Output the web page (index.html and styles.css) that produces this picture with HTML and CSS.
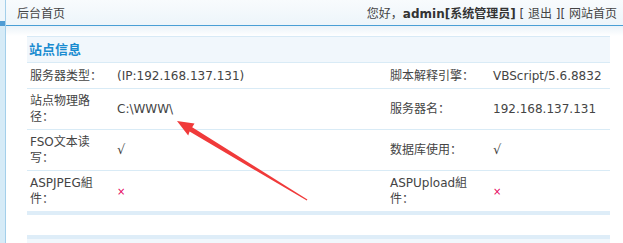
FILE: index.html
```html
<!doctype html>
<html lang="zh-CN">
  <head>
    <meta charset="UTF-8" />
    <title>后台首页</title>
    <link rel="stylesheet" href="styles.css">
  </head>
  <body>
    <div class="frame">
      <div class="side">
        <div class="side-top"></div>
        <div class="side-mark"></div>
      </div>

      <div class="main">
        <div class="topbar">
          <span class="crumb">后台首页</span>
          <span class="user">您好，<b>admin[系统管理员]</b> [ <a href="#">退出</a> ][ <a href="#">网站首页</a></span>
        </div>
        <div class="shade"></div>

        <div class="panel">
          <div class="panel-title">站点信息</div>
          <div class="row">
            <div class="label">服务器类型：</div>
            <div class="value">(IP:192.168.137.131)</div>
            <div class="label label-2">脚本解释引擎：</div>
            <div class="value">VBScript/5.6.8832</div>
          </div>
          <div class="row">
            <div class="label">站点物理路径：</div>
            <div class="value">C:\WWW\</div>
            <div class="label label-2">服务器名：</div>
            <div class="value">192.168.137.131</div>
          </div>
          <div class="row">
            <div class="label">FSO文本读写：</div>
            <div class="value"><span class="yes">√</span></div>
            <div class="label label-2">数据库使用：</div>
            <div class="value"><span class="yes">√</span></div>
          </div>
          <div class="row">
            <div class="label">ASPJPEG組件：</div>
            <div class="value"><span class="no">×</span></div>
            <div class="label label-2">ASPUpload組件：</div>
            <div class="value"><span class="no">×</span></div>
          </div>
          <div class="panel-foot"></div>
        </div>

        <div class="panel panel-next"></div>
      </div>
    </div>

    <!-- red annotation arrow drawn over the screenshot -->
    <svg class="note" width="623" height="243" viewBox="0 0 623 243">
      <polygon
        fill="#f03a3a"
        points="177,121 194.5,123.5 192.2,127.3 307.4,199.5 306.8,200.5 189.6,131.6 188.2,135.6"
      />
    </svg>
  </body>
</html>
```

FILE: styles.css
```css
body {
  margin: 0;
  overflow: hidden;
  background: #fff;
  color: #444;
  font-family: "DejaVu Sans", "Noto Sans CJK SC", sans-serif;
  font-size: 12px;
}
.frame {
  display: flex;
  min-height: 243px;
}
.side {
  width: 5px;
  flex: none;
  background: #d6ebf7;
  border-right: 1px solid #a3cfea;
}
.side-top {
  height: 21px;
  background: #eef6fb;
}
.side-mark {
  height: 5px;
  background: #4f9cd4;
}
.main {
  flex: 1;
}
.topbar {
  height: 25px;
  display: flex;
  align-items: center;
  justify-content: space-between;
  padding: 0 6px 0 11px;
  background: linear-gradient(#f8fbfd, #edf5fa);
  border-bottom: 1px solid #4a9fd5;
}
.topbar b {
  color: #333;
}
.topbar a {
  color: #444;
  text-decoration: none;
}
.shade {
  height: 10px;
  background: linear-gradient(#ebf3f9, #fff);
}
.panel {
  width: 583px;
  margin-left: 21px;
  border-top: 1px solid #d8eaf6;
}
.panel-title {
  height: 25px;
  line-height: 25px;
  padding-left: 2px;
  background: #f1f7fc;
  color: #1a8cd0;
  font-size: 13px;
  font-weight: bold;
}
.row {
  display: grid;
  grid-template-columns: 87px 273px 103px 120px;
  align-items: center;
  min-height: 25px;
  border-top: 1px solid #d9ebf6;
  line-height: 16px;
}
.label {
  padding: 4px 11px 4px 3px;
}
.label-2 {
  padding-right: 8px;
}
.value {
  padding: 4px 3px;
}
.yes {
  font-size: 13px;
}
.no {
  color: #e5005a;
  font-size: 10px;
}
.panel-foot {
  height: 4px;
  background: #deedf8;
}
.panel-next {
  margin-top: 20px;
  height: 20px;
  border-top: 4px solid #deedf8;
  background: #f1f7fc;
}
.note {
  position: absolute;
  top: 0;
  left: 0;
  pointer-events: none;
}
```
